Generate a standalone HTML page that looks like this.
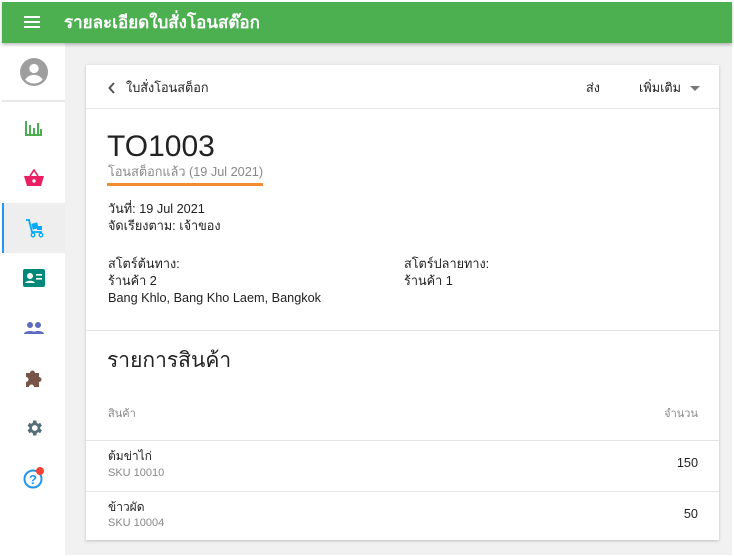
<!DOCTYPE html>
<html><head><meta charset="utf-8"><style>
*{box-sizing:border-box;margin:0;padding:0}
body{width:734px;height:557px;background:#fff;font-family:"Liberation Sans","Noto Sans CJK SC",sans-serif;color:#222;position:relative;overflow:hidden}
.frame{position:absolute;left:2px;top:2px;width:730px;height:553px;background:#f1f1f1}
.top{position:absolute;left:0;top:0;width:730px;height:41px;background:#4caf50;box-shadow:0 2px 3px rgba(0,0,0,.25);color:#fff;z-index:2}
.top .t{position:absolute;left:62px;top:7px;font-size:17px;font-weight:bold}
.ham{position:absolute;left:22px;top:14px;width:16px;height:12px;border-top:2px solid #fff;border-bottom:2px solid #fff}
.ham:after{content:"";position:absolute;left:0;top:3px;width:16px;height:2px;background:#fff}
.side{position:absolute;left:0;top:41px;width:63px;height:512px;background:#fff}
.it{position:absolute;left:0;width:63px;height:50px;display:flex;align-items:center;justify-content:center}
.card{position:absolute;left:84px;top:63px;width:633px;height:475px;background:#fff;box-shadow:0 1px 3px rgba(0,0,0,.2)}
.abs{position:absolute;white-space:nowrap}
.hr{position:absolute;left:0;width:633px;height:1px;background:#e4e4e4}
.s13{font-size:12.7px}
</style></head><body><div class="frame">
<div class="top"><div class="ham"></div><div class="t">รายละเอียดใบสั่งโอนสต๊อก</div></div>
<div class="side">
<div class="it" style="top:4px;height:50px"><svg width="28" height="28" viewBox="0 0 24 24"><circle cx="12" cy="12" r="12" fill="#9e9e9e"/><circle cx="12" cy="9" r="4" fill="#fff"/><path d="M4.5 18.5c2-3 5-4 7.5-4s5.5 1 7.5 4a10 10 0 0 1-15 0z" fill="#fff"/></svg></div>
<div style="position:absolute;top:57px;left:0;width:63px;height:2px;background:#e8e8e8"></div>
<div class="it" style="top:60px"><svg width="18" height="16" viewBox="0 0 18 16"><path d="M1 1v14h16" stroke="#4caf50" stroke-width="2" fill="none"/><rect x="4" y="5" width="2" height="9" fill="#4caf50"/><rect x="8" y="8" width="2" height="6" fill="#4caf50"/><rect x="12" y="3" width="2" height="11" fill="#4caf50"/><rect x="15" y="9" width="2" height="5" fill="#4caf50"/></svg></div>
<div class="it" style="top:110px"><svg width="20" height="18" viewBox="0 0 20 18"><path d="M6 7l4-6 4 6" stroke="#e91e63" stroke-width="1.6" fill="none"/><path d="M0 7h20l-3 10H3z" fill="#e91e63"/><circle cx="10" cy="12" r="1.7" fill="#fff"/></svg></div>
<div class="it" style="top:160px;background:#eee;border-left:2px solid #2196f3"><svg width="20" height="20" viewBox="0 0 20 20"><path d="M1 2h3l3 12h10" stroke="#03a9f4" stroke-width="1.8" fill="none"/><rect x="7" y="5" width="6" height="6" fill="#03a9f4" transform="rotate(-15 10 8)"/><rect x="12" y="8" width="5" height="4" fill="#03a9f4"/><circle cx="8" cy="17" r="1.8" fill="none" stroke="#03a9f4" stroke-width="1.3"/><circle cx="16" cy="17" r="1.8" fill="none" stroke="#03a9f4" stroke-width="1.3"/></svg></div>
<div class="it" style="top:210px"><svg width="22" height="18" viewBox="0 0 22 18"><rect width="22" height="18" rx="2" fill="#00897b"/><circle cx="7" cy="7" r="3" fill="#fff"/><path d="M2 14c1-3 9-3 10 0z" fill="#fff"/><rect x="13" y="5" width="6" height="1.6" fill="#fff"/><rect x="13" y="9" width="6" height="1.6" fill="#fff"/></svg></div>
<div class="it" style="top:260px"><svg width="20" height="14" viewBox="0 0 20 14"><circle cx="6" cy="4" r="3" fill="#5c6bc0"/><circle cx="14" cy="4" r="3" fill="#5c6bc0"/><path d="M0 13c0-4 12-4 12 0zM8 13c0-4 12-4 12 0z" fill="#5c6bc0"/></svg></div>
<div class="it" style="top:310px"><svg width="20" height="20" viewBox="0 0 20 20"><path d="M2 5h4a2.5 2.5 0 1 1 5 0h4v4a2.5 2.5 0 1 1 0 5v5h-5a2.5 2.5 0 1 0-5 0H2v-5a2.5 2.5 0 1 0 0-5z" fill="#795548"/></svg></div>
<div class="it" style="top:360px"><svg width="20" height="20" viewBox="0 0 24 24"><path fill="#546e7a" d="M19.4 13a7.5 7.5 0 0 0 0-2l2.1-1.6-2-3.5-2.5 1a7 7 0 0 0-1.7-1L14.9 3h-4l-.4 2.9a7 7 0 0 0-1.7 1l-2.5-1-2 3.5L6.4 11a7.5 7.5 0 0 0 0 2l-2.1 1.6 2 3.5 2.5-1a7 7 0 0 0 1.7 1l.4 2.9h4l.4-2.9a7 7 0 0 0 1.7-1l2.5 1 2-3.5zM12.9 15.5a3.5 3.5 0 1 1 0-7 3.5 3.5 0 0 1 0 7z"/></svg></div>
<div class="it" style="top:410px"><svg width="24" height="24" viewBox="0 0 24 24"><circle cx="11" cy="13" r="8.5" fill="none" stroke="#2196f3" stroke-width="2"/><text x="11" y="18" font-size="13" font-weight="bold" text-anchor="middle" fill="#2196f3" font-family="Liberation Sans">?</text><circle cx="18" cy="5" r="4" fill="#f44336"/></svg></div>
</div>
<div class="card">
<svg class="abs" style="left:22px;top:17px" width="8" height="12" viewBox="0 0 8 12"><path d="M6 1L1.5 6 6 11" stroke="#555" stroke-width="2" fill="none"/></svg>
<div class="abs s13" style="left:40px;top:12px">ใบสั่งโอนสต็อก</div>
<div class="abs s13" style="left:500px;top:12px">ส่ง</div>
<div class="abs s13" style="left:553px;top:12px">เพิ่มเติม</div>
<div class="abs" style="left:604px;top:21px;border:5px solid transparent;border-top-color:#777;border-bottom:0"></div>
<div class="hr" style="top:43px"></div>
<div class="abs" style="left:21px;top:65px;font-size:30px;color:#222">TO1003</div>
<div class="abs s13" style="left:22px;top:96px;color:#888">โอนสต็อกแล้ว (19 Jul 2021)</div>
<div class="abs" style="left:21px;top:118px;width:156px;height:3px;background:#f28c30"></div>
<div class="abs s13" style="left:22px;top:133px">วันที่: 19 Jul 2021</div>
<div class="abs s13" style="left:22px;top:150px">จัดเรียงตาม: เจ้าของ</div>
<div class="abs s13" style="left:22px;top:191px;line-height:17px">สโตร์ต้นทาง:<br>ร้านค้า 2<br>Bang Khlo, Bang Kho Laem, Bangkok</div>
<div class="abs s13" style="left:318px;top:191px;line-height:17px">สโตร์ปลายทาง:<br>ร้านค้า 1</div>
<div class="hr" style="top:265px"></div>
<div class="abs" style="left:21px;top:279px;font-size:21px">รายการสินค้า</div>
<div class="abs" style="left:22px;top:339px;font-size:11px;color:#888">สินค้า</div>
<div class="abs" style="right:21px;top:339px;font-size:11px;color:#888">จำนวน</div>
<div class="hr" style="top:375px"></div>
<div class="abs" style="left:22px;top:382px;font-size:12px">ต้มข่าไก่</div>
<div class="abs" style="left:22px;top:402px;font-size:11px;color:#888">SKU 10010</div>
<div class="abs s13" style="right:21px;top:391px">150</div>
<div class="hr" style="top:426px"></div>
<div class="abs" style="left:22px;top:433px;font-size:12px">ข้าวผัด</div>
<div class="abs" style="left:22px;top:452px;font-size:11px;color:#888">SKU 10004</div>
<div class="abs s13" style="right:21px;top:442px">50</div>
</div>
</div></body></html>
